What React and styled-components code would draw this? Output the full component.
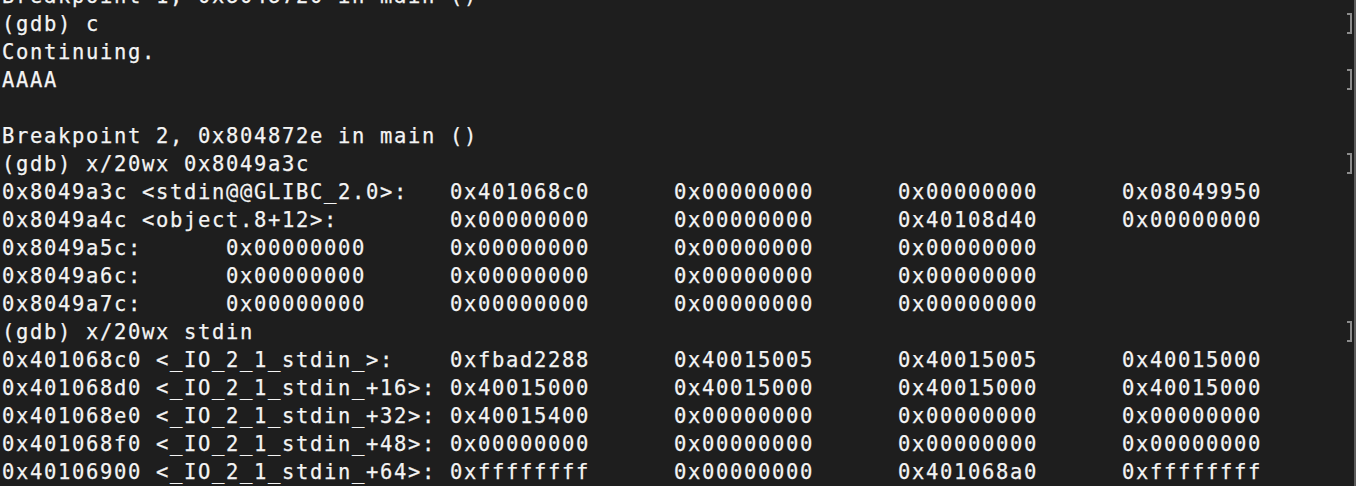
import React from 'react';
import styled, { createGlobalStyle } from 'styled-components';

const GlobalStyle = createGlobalStyle`
  html, body {
    margin: 0;
    padding: 0;
    background: #1e1e1e;
    overflow: hidden;
  }
`;

const Terminal = styled.div`
  position: relative;
  width: 1356px;
  height: 486px;
  box-sizing: border-box;
  overflow: hidden;
  background: #1e1e1e;
  border-right: 2px solid #5c5c5c;
  color: #f4f4f4;
  font-family: 'DejaVu Sans Mono', 'Liberation Mono', monospace;
  font-size: 20.5px;
  letter-spacing: 1.66px;
  line-height: 28px;
  -webkit-text-stroke: 0.25px #f4f4f4;
`;

const Scroll = styled.div`
  margin-top: -18px;
  padding-left: 2px;
`;

const Line = styled.div`
  position: relative;
  height: 28px;
  white-space: pre;

  ${({ $mark }) =>
    $mark &&
    `
    &::after {
      content: '';
      position: absolute;
      right: 2px;
      top: 3px;
      width: 3px;
      height: 17px;
      border: 2px solid #8c8c8c;
      border-left: none;
    }
  `}
`;

const MemRow = styled.div`
  display: grid;
  grid-template-columns: repeat(6, 224px);
  height: 28px;
  white-space: pre;
`;

const Label = styled.span`
  grid-column: span ${({ $span }) => $span};
`;

const Cell = styled.span``;

const rows1 = [
  ['0x8049a3c <stdin@@GLIBC_2.0>:', ['0x401068c0', '0x00000000', '0x00000000', '0x08049950']],
  ['0x8049a4c <object.8+12>:', ['0x00000000', '0x00000000', '0x40108d40', '0x00000000']],
  ['0x8049a5c:', ['0x00000000', '0x00000000', '0x00000000', '0x00000000']],
  ['0x8049a6c:', ['0x00000000', '0x00000000', '0x00000000', '0x00000000']],
  ['0x8049a7c:', ['0x00000000', '0x00000000', '0x00000000', '0x00000000']],
];

const rows2 = [
  ['0x401068c0 <_IO_2_1_stdin_>:', ['0xfbad2288', '0x40015005', '0x40015005', '0x40015000']],
  ['0x401068d0 <_IO_2_1_stdin_+16>:', ['0x40015000', '0x40015000', '0x40015000', '0x40015000']],
  ['0x401068e0 <_IO_2_1_stdin_+32>:', ['0x40015400', '0x00000000', '0x00000000', '0x00000000']],
  ['0x401068f0 <_IO_2_1_stdin_+48>:', ['0x00000000', '0x00000000', '0x00000000', '0x00000000']],
  ['0x40106900 <_IO_2_1_stdin_+64>:', ['0xffffffff', '0x00000000', '0x401068a0', '0xffffffff']],
];

const Memory = ({ rows }) =>
  rows.map(([label, words]) => (
    <MemRow key={label}>
      <Label $span={label.length > 15 ? 2 : 1}>{label}</Label>
      {words.map((w, i) => (
        <Cell key={i}>{w}</Cell>
      ))}
    </MemRow>
  ));

const App = () => (
  <Terminal>
    <GlobalStyle />
    <Scroll>
      <Line>Breakpoint 1, 0x8048720 in main ()</Line>
      <Line $mark>(gdb) c</Line>
      <Line>Continuing.</Line>
      <Line $mark>AAAA</Line>
      <Line> </Line>
      <Line>Breakpoint 2, 0x804872e in main ()</Line>
      <Line $mark>(gdb) x/20wx 0x8049a3c</Line>
      <Memory rows={rows1} />
      <Line $mark>(gdb) x/20wx stdin</Line>
      <Memory rows={rows2} />
    </Scroll>
  </Terminal>
);

export default App;
